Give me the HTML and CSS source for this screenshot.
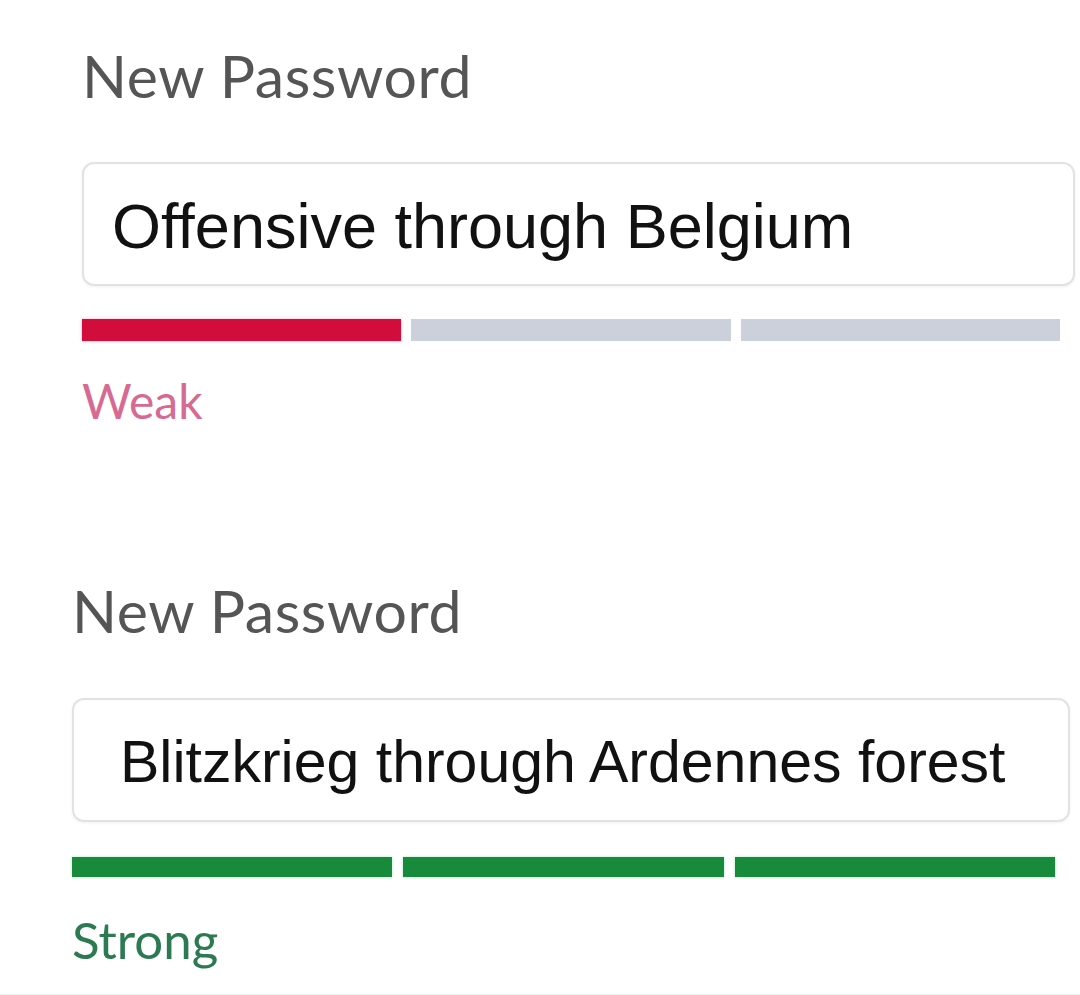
FILE: index.html
```html
<!DOCTYPE html>
<html lang="en">
<head>
<meta charset="utf-8">
<title>New Password</title>
<link rel="stylesheet" href="styles.css">
</head>
<body>
<main class="page">
  <section class="field field-weak">
    <div class="label">New Password</div>
    <div class="input"><span class="value value-weak">Offensive through Belgium</span></div>
    <div class="meter">
      <span class="seg seg-red"></span>
      <span class="seg seg-off"></span>
      <span class="seg seg-off"></span>
    </div>
    <div class="strength strength-weak">Weak</div>
  </section>
  <section class="field field-strong">
    <div class="label">New Password</div>
    <div class="input"><span class="value value-strong">Blitzkrieg through Ardennes forest</span></div>
    <div class="meter">
      <span class="seg seg-green"></span>
      <span class="seg seg-green"></span>
      <span class="seg seg-green"></span>
    </div>
    <div class="strength strength-strong">Strong</div>
  </section>
</main>
</body>
</html>
```
FILE: styles.css
```css
html, body {
  margin: 0;
  padding: 0;
  background: #ffffff;
}
.page {
  width: 1080px;
  height: 995px;
  display: flex;
  flex-direction: column;
  border-bottom: 1px solid #f1f1f1;
  box-sizing: border-box;
}
.field {
  display: flex;
  flex-direction: column;
}
.field-weak {
  padding-left: 82px;
  width: 993px;
  padding-top: 46px;
}
.field-strong {
  padding-left: 72px;
  width: 998px;
  padding-top: 156px;
}
.label {
  font-family: Lato, "Liberation Sans", sans-serif;
  font-size: 59px;
  line-height: 1;
  color: #555555;
  letter-spacing: 0.6px;
}
.input {
  margin-top: 57px;
  height: 124px;
  box-sizing: border-box;
  border: 2px solid #e2e2e2;
  border-radius: 12px;
  box-shadow: 0 1px 3px rgba(0,0,0,0.06);
  display: flex;
  align-items: center;
  padding-top: 4px;
}
.field-weak .input {
  padding-left: 28px;
}
.field-strong .input {
  padding-left: 46px;
  width: 998px;
  margin-top: 58px;
}
.value {
  font-family: "Liberation Sans", Arial, sans-serif;
  line-height: 1;
  color: #111111;
}
.value-weak {
  font-size: 63px;
}
.value-strong {
  font-size: 59px;
}
.meter {
  display: grid;
  grid-template-columns: 1fr 1fr 1fr;
  column-gap: 10px;
}
.field-weak .meter {
  margin-top: 33px;
  height: 22px;
  width: 978px;
}
.field-strong .meter {
  margin-top: 35px;
  height: 20px;
  width: 983px;
  column-gap: 11px;
}
.seg {
  display: block;
}
.seg-red {
  background: #d20d3c;
  box-shadow: 0 0 3px rgba(230, 80, 130, 0.45);
}
.seg-off {
  background: #ccd0da;
}
.seg-green {
  background: #178a3c;
  box-shadow: 0 0 3px rgba(60, 200, 120, 0.4);
}
.strength {
  font-family: Lato, "Liberation Sans", sans-serif;
  line-height: 1;
}
.strength-weak {
  margin-top: 36px;
  font-size: 48px;
  color: #d66a92;
}
.strength-strong {
  margin-top: 37px;
  font-size: 51px;
  color: #2c7a52;
}
```
